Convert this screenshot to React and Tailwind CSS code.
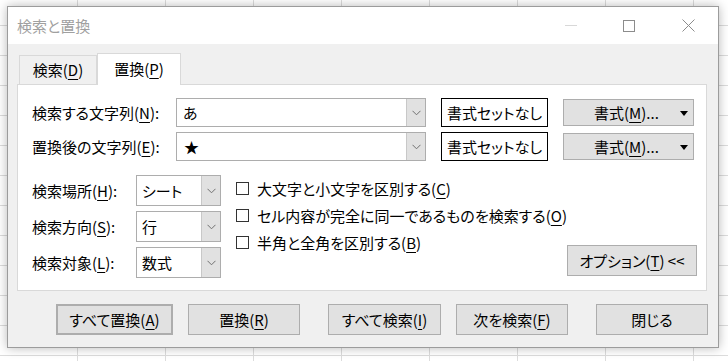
const FONT = "font-['Noto_Sans_CJK_JP','Noto_Sans',sans-serif] [font-feature-settings:'palt']"

// mnemonic letter, underlined like a Windows access key
const K = ({ c }) => <span className="underline underline-offset-[3px] decoration-1">{c}</span>

function Chevron() {
  return (
    <svg width="9" height="6" viewBox="0 0 9 6" className="text-[#707070]">
      <path d="M0.5 0.8 L4.5 4.8 L8.5 0.8" fill="none" stroke="currentColor" strokeWidth="1" />
    </svg>
  )
}

function Combo({ value, width, height, text }) {
  return (
    <div className={`flex ${width} ${height} border border-[#adadad] bg-white`}>
      <div className={`flex-1 flex items-center pl-[5px] ${text}`}>{value}</div>
      <div className="w-[19px] flex items-center justify-center bg-[#e1e1e1] border-l border-[#c8c8c8]">
        <Chevron />
      </div>
    </div>
  )
}

function Check({ children }) {
  return (
    <div className="h-[27px] flex items-center whitespace-nowrap">
      <div className="w-[13px] h-[13px] border border-[#333] bg-white shrink-0" />
      <span className="ml-[8px]">{children}</span>
    </div>
  )
}

function Btn({ children, cls = '' }) {
  return (
    <div className={`h-[31px] flex items-center justify-center whitespace-nowrap bg-[#e1e1e1] border border-[#adadad] ${cls}`}>
      {children}
    </div>
  )
}

function FormatBtn() {
  return (
    <div className="ml-[15px] w-[131px] h-[27px] bg-[#e1e1e1] border border-[#adadad] flex items-center relative">
      <span className="ml-[30px]">書式(<K c="M" />)...</span>
      <svg width="8" height="5" viewBox="0 0 8 5" className="absolute right-[5px] top-[11px]">
        <path d="M0 0 H8 L4 5 Z" fill="#000" />
      </svg>
    </div>
  )
}

export default function App() {
  return (
    <div
      className={`w-[728px] h-[361px] overflow-hidden bg-white pt-[6px] pl-[7px] text-[15px] leading-none text-black ${FONT}
        bg-[linear-gradient(to_right,#dcdcdc_1px,transparent_1px),linear-gradient(to_bottom,#dcdcdc_1px,transparent_1px)]
        bg-[size:88px_30px] bg-[position:77px_25px]`}
    >
      <div className="w-[712px] h-[342px] flex flex-col border border-[#9c9c9c] shadow-[0_0_10px_rgba(0,0,0,0.28)]">

        {/* Title bar */}
        <div className="h-[37px] bg-white flex items-center pl-[9px] shrink-0">
          <span className="text-[#a0a0a0] text-[15px]">検索と置換</span>
          <div className="ml-auto flex items-center h-full">
            <div className="w-[12px] h-[1px] bg-[#d8d8d8] mr-[46px]" />
            <div className="w-[12px] h-[12px] border border-[#8c8c8c] mr-[47px]" />
            <svg width="13" height="13" viewBox="0 0 13 13" className="mr-[23px]">
              <path d="M0.5 0.5 L12.5 12.5 M12.5 0.5 L0.5 12.5" stroke="#8c8c8c" strokeWidth="1" />
            </svg>
          </div>
        </div>

        {/* Body */}
        <div className="flex-1 bg-[#f0f0f0] pl-[9px] pt-[9px]">

          {/* Tabs */}
          <div className="flex items-end h-[31px] pl-[2px]">
            <div className="w-[78px] h-[29px] flex items-center justify-center border border-b-0 border-[#d9d9d9] bg-[#f0f0f0] pb-[1px]">
              <span>検索(<K c="D" />)</span>
            </div>
            <div className="w-[84px] h-[32px] flex items-center justify-center border border-b-0 border-[#d9d9d9] bg-white -mb-[1px] relative pb-[3px]">
              <span>置換(<K c="P" />)</span>
            </div>
          </div>

          {/* Panel */}
          <div className="w-[690px] h-[207px] border border-[#d9d9d9] bg-white pl-[14px] pt-[13px] pr-[12px] whitespace-nowrap">
            <div className="flex items-center h-[29px]">
              <div className="w-[144px]">検索する文字列(<K c="N" />):</div>
              <Combo value="あ" width="w-[250px]" height="h-[29px]" text="pl-[6px]" />
              <div className="ml-[15px] w-[107px] h-[29px] border border-black bg-white flex items-center justify-center">書式セットなし</div>
              <FormatBtn />
            </div>
            <div className="flex items-center h-[29px] mt-[5px]">
              <div className="w-[144px]">置換後の文字列(<K c="E" />):</div>
              <Combo value="★" width="w-[250px]" height="h-[29px]" text="pl-[7px]" />
              <div className="ml-[15px] w-[107px] h-[29px] border border-black bg-white flex items-center justify-center">書式セットなし</div>
              <FormatBtn />
            </div>

            <div className="flex mt-[14px]">
              <div className="flex flex-col gap-[5px]">
                {[
                  ['検索場所', 'H', 'シート'],
                  ['検索方向', 'S', '行'],
                  ['検索対象', 'L', '数式'],
                ].map(([l, k, v]) => (
                  <div key={k} className="flex items-center h-[31px]">
                    <div className="w-[104px]">{l}(<K c={k} />):</div>
                    <Combo value={v} width="w-[85px]" height="h-[31px]" text="pl-[4px]" />
                  </div>
                ))}
              </div>
              <div className="ml-[15px] flex flex-col">
                <Check>大文字と小文字を区別する(<K c="C" />)</Check>
                <Check>セル内容が完全に同一であるものを検索する(<K c="O" />)</Check>
                <Check>半角と全角を区別する(<K c="B" />)</Check>
              </div>
              <div className="ml-auto self-end mb-[2px] mr-[1px]">
                <Btn cls="w-[130px]"><span>オプション(<K c="T" />) &lt;&lt;</span></Btn>
              </div>
            </div>
          </div>

          {/* Bottom buttons */}
          <div className="flex mt-[13px] pl-[39px]">
            <Btn cls="w-[117px] border-2 border-[#0078d7]">すべて置換(<K c="A" />)</Btn>
            <Btn cls="w-[112px] ml-[15px]">置換(<K c="R" />)</Btn>
            <Btn cls="w-[113px] ml-[28px]">すべて検索(<K c="I" />)</Btn>
            <Btn cls="w-[112px] ml-[15px]">次を検索(<K c="F" />)</Btn>
            <Btn cls="w-[112px] ml-[28px]">閉じる</Btn>
          </div>
        </div>
      </div>
    </div>
  )
}
